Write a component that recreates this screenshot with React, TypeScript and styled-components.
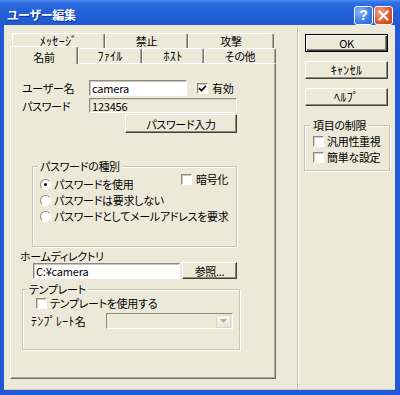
import React from "react";
import styled, { createGlobalStyle, css } from "styled-components";

const FONT = `"Noto Sans CJK JP", "Noto Sans", sans-serif`;
const FACE = "#ECE9D8";
const DARK = "#716F64";
const MID = "#ACA899";

const Global = createGlobalStyle`
  html, body { margin: 0; padding: 0; background: #fff; }
  * { box-sizing: border-box; }
`;

const Window = styled.div`
  width: 400px;
  height: 395px;
  display: flex;
  flex-direction: column;
  font-family: ${FONT};
  font-size: 11px;
  line-height: 14px;
  letter-spacing: -0.3px;
  font-feature-settings: "palt";
  color: #000;
  background: #1d56d4;
`;

const TitleBar = styled.div`
  height: 25px;
  flex: none;
  display: flex;
  align-items: center;
  padding: 5px 7px 0 7px;
  background: linear-gradient(#4d8cf2 0, #2f6ee2 3px, #2460d8 45%, #1f59d2 100%);
  color: #fff;
`;

const Title = styled.div`
  flex: 1;
  font-weight: bold;
  font-size: 12px;
  letter-spacing: -0.3px;
  text-shadow: 1px 1px #0c2f96;
`;

const CaptionButton = styled.div<{ $kind: "help" | "close" }>`
  width: 19px;
  height: 19px;
  margin-left: 1px;
  border: 1px solid #fff;
  border-radius: 3px;
  display: flex;
  align-items: center;
  justify-content: center;
  color: #fff;
  font: bold 14px "Liberation Sans", sans-serif;
  letter-spacing: 0;
  background: ${(p) =>
    p.$kind === "close"
      ? "radial-gradient(circle at 30% 30%, #f4a184, #e0552c 60%, #c8401a)"
      : "radial-gradient(circle at 30% 30%, #8cb6fb, #3f7ae6 60%, #2c63d6)"};
`;

const Frame = styled.div`
  flex: 1;
  min-height: 0;
  display: flex;
  background: ${FACE};
  border-left: 4px solid #2058d6;
  border-right: 5px solid #2058d6;
  border-bottom: 5px solid #2058d6;
  box-shadow: inset 0 -1px #cfccbd;
`;

const LeftCol = styled.div`
  width: 266px;
  flex: none;
  margin: 8px 0 11px 6px;
  display: flex;
  flex-direction: column;
`;

const TabRow = styled.div<{ $indent: number }>`
  display: flex;
  align-items: flex-start;
  height: 15px;
  flex: none;
  padding-left: ${(p) => p.$indent}px;
`;

const Tab = styled.div<{ $w: number; $active?: boolean }>`
  width: ${(p) => p.$w}px;
  height: 15px;
  flex: none;
  display: flex;
  align-items: center;
  justify-content: center;
  border-top: 1px solid #fff;
  border-left: 1px solid #fff;
  border-right: 1px solid ${DARK};
  box-shadow: inset -1px 0 ${MID};
  border-radius: 2px 2px 0 0;
  background: ${FACE};
  ${(p) =>
    p.$active &&
    css`
      height: 18px;
      margin-top: -2px;
      position: relative;
      z-index: 1;
      padding-top: 2px;
    `}
`;

const HalfWidth = styled.span`
  font-size: 12px;
  letter-spacing: 0.3px;
`;

const Panel = styled.div`
  flex: 1;
  border-top: 1px solid #fff;
  border-left: 1px solid #fff;
  border-right: 1px solid ${DARK};
  border-bottom: 1px solid ${DARK};
  box-shadow: inset -1px -1px ${MID};
  padding: 16px 0 0 11px;
  display: flex;
  flex-direction: column;
  align-items: flex-start;
`;

const Row = styled.div<{ $ml?: number; $mt?: number; $gap?: number }>`
  display: flex;
  align-items: center;
  margin-left: ${(p) => p.$ml ?? 0}px;
  margin-top: ${(p) => p.$mt ?? 0}px;
  gap: ${(p) => p.$gap ?? 0}px;
`;

const Label = styled.span<{ $w?: number; $ml?: number; $mt?: number }>`
  display: inline-block;
  white-space: nowrap;
  ${(p) => p.$w !== undefined && `width: ${p.$w}px; flex: none;`}
  margin-left: ${(p) => p.$ml ?? 0}px;
  margin-top: ${(p) => p.$mt ?? 0}px;
`;

const Edit = styled.input<{ $w: number; $h?: number; $flat?: boolean }>`
  width: ${(p) => p.$w}px;
  height: ${(p) => p.$h ?? 16}px;
  flex: none;
  margin: 0;
  padding: 0 0 0 2px;
  font-family: ${FONT};
  font-size: 11px;
  letter-spacing: -0.2px;
  color: #000;
  outline: none;
  background: ${(p) => (p.$flat ? FACE : "#fff")};
  border-top: 1px solid #8d8b7f;
  border-left: 1px solid #8d8b7f;
  border-right: 1px solid #fff;
  border-bottom: 1px solid #fff;
  box-shadow: inset 1px 1px ${(p) => (p.$flat ? "#d8d5c6" : "#c8c5b6")};
`;

const Button = styled.button<{ $w?: number; $h?: number; $default?: boolean; $ml?: number; $mt?: number }>`
  width: ${(p) => p.$w ?? 83}px;
  height: ${(p) => p.$h ?? 18}px;
  flex: none;
  margin: ${(p) => p.$mt ?? 0}px 0 0 ${(p) => p.$ml ?? 0}px;
  padding: 0;
  font-family: ${FONT};
  font-size: 11px;
  font-feature-settings: "palt";
  letter-spacing: -0.3px;
  line-height: 14px;
  color: #000;
  background: ${FACE};
  border: 1px solid;
  border-color: #fff #404040 #404040 #fff;
  box-shadow: inset -1px -1px #8d8b7f;
  ${(p) =>
    p.$default &&
    css`
      border: 1px solid #000;
      box-shadow: inset 1px 1px #fff, inset -1px -1px #404040, inset -2px -2px #8d8b7f;
    `}
`;

const Check = styled.span`
  width: 11px;
  height: 11px;
  flex: none;
  display: inline-flex;
  align-items: center;
  justify-content: center;
  background: #fff;
  border-top: 1px solid #8d8b7f;
  border-left: 1px solid #8d8b7f;
  border-right: 1px solid #fff;
  border-bottom: 1px solid #fff;
  box-shadow: inset 1px 1px #d0cdbf;
`;

const RadioDot = styled.span<{ $on?: boolean }>`
  width: 11px;
  height: 11px;
  flex: none;
  border-radius: 50%;
  background: #fff;
  border: 1px solid;
  border-color: #8d8b7f #fff #fff #8d8b7f;
  display: inline-flex;
  align-items: center;
  justify-content: center;
  &::after {
    content: "";
    width: 3px;
    height: 3px;
    border-radius: 50%;
    background: #000;
    display: ${(p) => (p.$on ? "block" : "none")};
  }
`;

const Option = styled.label<{ $gap?: number; $h?: number; $ml?: number; $mt?: number }>`
  display: flex;
  align-items: center;
  gap: ${(p) => p.$gap ?? 3}px;
  height: ${(p) => p.$h ?? 16}px;
  margin-left: ${(p) => p.$ml ?? 0}px;
  margin-top: ${(p) => p.$mt ?? 0}px;
  white-space: nowrap;
`;

const Group = styled.fieldset<{ $w: number; $h: number; $ml?: number; $mt?: number; $pl?: number }>`
  width: ${(p) => p.$w}px;
  height: ${(p) => p.$h}px;
  flex: none;
  margin: ${(p) => p.$mt ?? 0}px 0 0 ${(p) => p.$ml ?? 0}px;
  padding: 0 0 0 ${(p) => p.$pl ?? 7}px;
  min-inline-size: 0;
  border: 1px solid #c9c6b6;
  box-shadow: inset 1px 1px #fff, 1px 1px #fff;
`;

const Legend = styled.legend<{ $ml?: number }>`
  padding: 0 2px;
  margin-left: ${(p) => p.$ml ?? -2}px;
  line-height: 12px;
  background: ${FACE};
  position: relative;
`;

const Overlay = styled.div`
  display: grid;
  grid-template-areas: "cell";
`;

const RadioList = styled.div`
  grid-area: cell;
  padding-top: 4px;
  display: flex;
  flex-direction: column;
`;

const CornerOption = styled(Option)`
  grid-area: cell;
  justify-self: end;
  align-self: start;
  height: 14px;
  margin-right: 8px;
`;

const Combo = styled.div<{ $w: number }>`
  width: ${(p) => p.$w}px;
  height: 16px;
  flex: none;
  display: flex;
  justify-content: flex-end;
  align-items: center;
  padding-right: 1px;
  background: ${FACE};
  border-top: 1px solid #8d8b7f;
  border-left: 1px solid #8d8b7f;
  border-right: 1px solid #fff;
  border-bottom: 1px solid #fff;
`;

const DropBtn = styled.span`
  width: 15px;
  height: 13px;
  display: flex;
  align-items: center;
  justify-content: center;
  background: linear-gradient(#f7f6f1, #e6e4da);
  border: 1px solid #d8d6cc;
  border-radius: 1px;
`;

const Separator = styled.div`
  width: 2px;
  flex: none;
  margin: 3px 0 1px 21px;
  border-left: 1px solid #c2bfae;
  border-right: 1px solid #fff;
`;

const RightCol = styled.div`
  width: 96px;
  flex: none;
  padding: 9px 0 0 6px;
  display: flex;
  flex-direction: column;
  align-items: flex-start;
  gap: 9px;
`;

const CheckList = styled.div`
  padding-top: 2px;
  display: flex;
  flex-direction: column;
`;

const Tick = () => (
  <svg width="9" height="9" viewBox="0 0 9 9">
    <path d="M1 4.2 L3.4 6.6 L8 1.8" stroke="#000" strokeWidth="1.7" fill="none" />
  </svg>
);

const CloseX = () => (
  <svg width="11" height="11" viewBox="0 0 11 11">
    <path d="M1.5 1.5 L9.5 9.5 M9.5 1.5 L1.5 9.5" stroke="#fff" strokeWidth="2.2" strokeLinecap="round" />
  </svg>
);

const Arrow = () => (
  <svg width="7" height="4" viewBox="0 0 7 4">
    <path d="M0 0 H7 L3.5 4 Z" fill="#b3b1a6" />
  </svg>
);

export default function App() {
  return (
    <>
      <Global />
      <Window>
        <TitleBar>
          <Title>ユーザー編集</Title>
          <CaptionButton $kind="help">?</CaptionButton>
          <CaptionButton $kind="close">
            <CloseX />
          </CaptionButton>
        </TitleBar>
        <Frame>
          <LeftCol>
            <TabRow $indent={2}>
              <Tab $w={93}>
                <HalfWidth>ﾒｯｾｰｼﾞ</HalfWidth>
              </Tab>
              <Tab $w={83}>禁止</Tab>
              <Tab $w={86}>攻撃</Tab>
            </TabRow>
            <TabRow $indent={0}>
              <Tab $w={68} $active>
                名前
              </Tab>
              <Tab $w={64}>
                <HalfWidth>ﾌｧｲﾙ</HalfWidth>
              </Tab>
              <Tab $w={62}>
                <HalfWidth>ﾎｽﾄ</HalfWidth>
              </Tab>
              <Tab $w={72}>その他</Tab>
            </TabRow>
            <Panel>
              <Row>
                <Label $w={67}>ユーザー名</Label>
                <Edit $w={98} value="camera" readOnly />
                <Option $ml={10} $gap={4}>
                  <Check>
                    <Tick />
                  </Check>
                  有効
                </Option>
              </Row>
              <Row $mt={2}>
                <Label $w={67}>パスワード</Label>
                <Edit $w={148} $h={15} $flat value="123456" readOnly />
              </Row>
              <Button $w={112} $h={19} $ml={103} $mt={1}>
                パスワード入力
              </Button>

              <Group $w={205} $h={87} $ml={10} $mt={27}>
                <Legend>パスワードの種別</Legend>
                <Overlay>
                  <RadioList>
                    <Option>
                      <RadioDot $on />
                      パスワードを使用
                    </Option>
                    <Option>
                      <RadioDot />
                      パスワードは要求しない
                    </Option>
                    <Option>
                      <RadioDot />
                      パスワードとしてメールアドレスを要求
                    </Option>
                  </RadioList>
                  <CornerOption $gap={4}>
                    <Check />
                    暗号化
                  </CornerOption>
                </Overlay>
              </Group>

              <Label $ml={-2} $mt={2}>
                ホームディレクトリ
              </Label>
              <Row $ml={11} $mt={-1} $gap={2}>
                <Edit $w={147} $h={16} value="C:¥camera" readOnly />
                <Button $w={55} $h={17}>
                  参照...
                </Button>
              </Row>

              <Group $w={218} $h={67} $mt={4} $pl={9}>
                <Legend $ml={-5}>テンプレート</Legend>
                <Option $ml={4} $h={14} $mt={1}>
                  <Check />
                  テンプレートを使用する
                </Option>
                <Row $mt={3} $ml={-1}>
                  <Label $w={75}>
                    <HalfWidth>ﾃﾝﾌﾟﾚｰﾄ</HalfWidth>名
                  </Label>
                  <Combo $w={127}>
                    <DropBtn>
                      <Arrow />
                    </DropBtn>
                  </Combo>
                </Row>
              </Group>
            </Panel>
          </LeftCol>
          <Separator />
          <RightCol>
            <Button $default>OK</Button>
            <Button>
              <HalfWidth>ｷｬﾝｾﾙ</HalfWidth>
            </Button>
            <Button>
              <HalfWidth>ﾍﾙﾌﾟ</HalfWidth>
            </Button>
            <Group $w={86} $h={52} $ml={-1} $mt={4} $pl={8}>
              <Legend $ml={-2}>項目の制限</Legend>
              <CheckList>
                <Option>
                  <Check />
                  汎用性重視
                </Option>
                <Option>
                  <Check />
                  簡単な設定
                </Option>
              </CheckList>
            </Group>
          </RightCol>
        </Frame>
      </Window>
    </>
  );
}
